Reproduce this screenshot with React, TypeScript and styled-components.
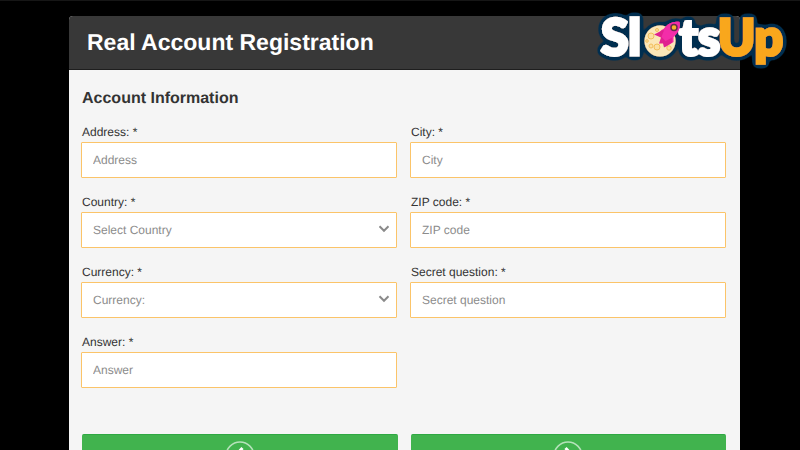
import React, { useId } from "react";
import styled, { createGlobalStyle } from "styled-components";

const GlobalStyle = createGlobalStyle`
  *, *::before, *::after { box-sizing: border-box; }
  html { background: #000; scrollbar-width: none; }
  body {
    margin: 0;
    background: #000;
    color: #333;
    font-family: "Liberation Sans", Arial, sans-serif;
    font-size: 12px;
    text-rendering: geometricPrecision;
  }
`;

const Page = styled.div`
  position: relative;
  border-top: 1px solid #161616;
  padding: 15px 60px 0 69px;
`;

const Panel = styled.main`
  background: #f5f5f5;
  border-radius: 4px;
  overflow: hidden;
`;

const PanelHeader = styled.header`
  display: flex;
  align-items: center;
  height: 54px;
  padding: 0 18px 2px;
  background: #383838;
  border-bottom: 1px solid #1e1e1e;
`;

const Title = styled.h1`
  margin: 0;
  color: #fff;
  font-size: 23px;
  line-height: 28px;
`;

const Form = styled.form`
  padding: 19px 14px 16px 12px;
`;

const SectionTitle = styled.h2`
  margin: 0 0 15px;
  padding-left: 1px;
  font-size: 16px;
  line-height: 20px;
`;

const Grid = styled.div`
  display: grid;
  grid-template-columns: 1fr 1fr;
  column-gap: 13px;
  row-gap: 16px;
`;

const Field = styled.div`
  display: flex;
  flex-direction: column;
`;

const Label = styled.label`
  padding-left: 1px;
  line-height: 16px;
  margin-bottom: 2px;
`;

const controlStyle = `
  width: 100%;
  height: 36px;
  margin: 0;
  padding: 0 11px;
  border: 1px solid #fbc469;
  border-radius: 1px;
  background: #fff;
  font-family: inherit;
  font-size: 12px;
  text-rendering: inherit;
  outline: none;
`;

const Input = styled.input`
  ${controlStyle}
  color: #333;
  &::placeholder { color: #8c8c8c; opacity: 1; }
`;

const SelectBox = styled.div`
  display: grid;
  align-items: center;
  > * { grid-area: 1 / 1; }
`;

const Select = styled.select`
  ${controlStyle}
  appearance: none;
  color: #8c8c8c;
`;

const Chevron = styled.svg`
  justify-self: end;
  width: 12px;
  height: 8px;
  margin: 0 7px 2px 0;
  pointer-events: none;
`;

const Actions = styled(Grid)`
  margin-top: 46px;
  padding-left: 1px;
`;

const ActionButton = styled.button`
  display: flex;
  justify-content: center;
  height: 58px;
  padding: 6px 0 0;
  border: 0;
  border-top: 1px solid #2fa843;
  border-radius: 2px;
  background: #41b34e;
  cursor: pointer;
`;

const LogoLink = styled.a`
  position: absolute;
  top: -1px;
  right: 8px;
  line-height: 0;
`;

const LogoText = styled.text<{ $color: string }>`
  font-family: Lato, "Open Sans", sans-serif;
  font-weight: 900;
  font-size: 50px;
  fill: ${({ $color }) => $color};
  stroke: ${({ $color }) => $color};
  stroke-width: 3px;
`;

type FieldProps = { label: string; placeholder: string };

function TextField({ label, placeholder }: FieldProps) {
  const id = useId();
  return (
    <Field>
      <Label htmlFor={id}>{label} *</Label>
      <Input id={id} type="text" placeholder={placeholder} />
    </Field>
  );
}

function SelectField({ label, placeholder }: FieldProps) {
  const id = useId();
  return (
    <Field>
      <Label htmlFor={id}>{label} *</Label>
      <SelectBox>
        <Select id={id} defaultValue="">
          <option value="">{placeholder}</option>
        </Select>
        <Chevron viewBox="0 0 12 8" fill="none" stroke="#8a8a8a" strokeWidth="2" aria-hidden="true">
          <path d="M1.5 1.2 6 5.8 10.5 1.2" />
        </Chevron>
      </SelectBox>
    </Field>
  );
}

function ArrowIcon({ direction }: { direction: "left" | "right" }) {
  return (
    <svg width="30" height="30" viewBox="0 0 30 30" fill="none" aria-hidden="true">
      <circle cx="15" cy="15" r="14" stroke="#b5e2ba" strokeWidth="1.5" />
      <path
        d={direction === "left" ? "M17.500 7 10 15l7.500 8" : "M12.500 7 20 15l-7.500 8"}
        stroke="#fff"
        strokeWidth="3"
      />
    </svg>
  );
}

function Logo() {
  return (
    <svg width="198" height="76" viewBox="0 0 198 76" role="img" aria-label="SlotsUp">
      <defs>
        <filter id="logo-outline" x="-10%" y="-20%" width="120%" height="140%">
          <feGaussianBlur in="SourceAlpha" stdDeviation="2.8" result="soft" />
          <feComponentTransfer in="soft" result="edge">
            <feFuncA type="linear" slope="16" intercept="-0.6" />
          </feComponentTransfer>
          <feFlood floodColor="#062f50" />
          <feComposite in2="edge" operator="in" result="outline" />
          <feMerge>
            <feMergeNode in="outline" />
            <feMergeNode in="SourceGraphic" />
          </feMerge>
        </filter>
      </defs>
      <g filter="url(#logo-outline)">
        <LogoText $color="#fff" x="7" y="55">Sl</LogoText>
        <LogoText $color="#fff" x="85" y="55">ts</LogoText>
        <LogoText $color="#f9a71c" x="124" y="55">Up</LogoText>
        <circle cx="66" cy="41" r="15.5" fill="#fbe7b8" />
        <path d="M85.500 22c-7-1-12 2-16 7l-2 1-5 5 6 2-2 6 4 0 1 4 8-5 0-6c5-4 7-9 6-14Z" fill="#ef2aa4" />
      </g>
      <g fill="#fbe0a2" stroke="#f2bd5b" strokeWidth="1">
        <circle cx="57" cy="36" r="3" />
        <circle cx="57" cy="46" r="2" />
        <circle cx="63" cy="47" r="3" />
        <circle cx="75" cy="48" r="2.2" />
        <circle cx="53" cy="41" r="1.3" />
        <circle cx="63" cy="30" r="1.5" />
      </g>
      <path d="m69 30-9 4.500 7 3-2 6 4 0 1 4 8-5v-6z" fill="#e0208f" />
      <path d="M85.500 22c-7-1-12 2-15 7l-3 8 4 4 8-4c5-4 7-9 6-15Z" fill="#f32da9" />
      <circle cx="80" cy="27.500" r="3" fill="#f9b72b" stroke="#63304b" strokeWidth="1.500" />
    </svg>
  );
}

export default function App() {
  return (
    <>
      <GlobalStyle />
      <Page>
        <Panel>
          <PanelHeader>
            <Title>Real Account Registration</Title>
          </PanelHeader>
          <Form onSubmit={(event) => event.preventDefault()}>
            <SectionTitle>Account Information</SectionTitle>
            <Grid>
              <TextField label="Address:" placeholder="Address" />
              <TextField label="City:" placeholder="City" />
              <SelectField label="Country:" placeholder="Select Country" />
              <TextField label="ZIP code:" placeholder="ZIP code" />
              <SelectField label="Currency:" placeholder="Currency:" />
              <TextField label="Secret question:" placeholder="Secret question" />
              <TextField label="Answer:" placeholder="Answer" />
            </Grid>
            <Actions>
              <ActionButton type="button" aria-label="Previous step">
                <ArrowIcon direction="left" />
              </ActionButton>
              <ActionButton type="submit" aria-label="Next step">
                <ArrowIcon direction="right" />
              </ActionButton>
            </Actions>
          </Form>
        </Panel>
        <LogoLink href="#" aria-label="SlotsUp">
          <Logo />
        </LogoLink>
      </Page>
    </>
  );
}
